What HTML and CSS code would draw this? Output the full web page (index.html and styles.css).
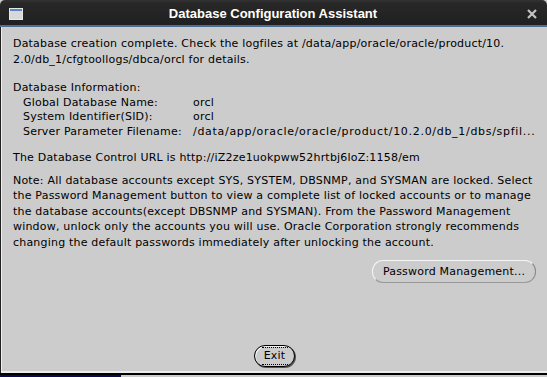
FILE: index.html
```html
<!DOCTYPE html>
<html>
<head>
<meta charset="utf-8">
<link rel="stylesheet" href="styles.css">
</head>
<body>
<div class="window">
  <div class="titlebar">
    <svg class="winicon" width="14" height="12" viewBox="0 0 14 12">
      <rect x="0.5" y="0.5" width="13" height="11" fill="#d8d8d8" stroke="#e8e8e8"/>
      <rect x="1" y="1" width="12" height="2" fill="#5b87c8"/>
    </svg>
    <span class="title">Database Configuration Assistant</span>
    <svg class="close" width="10" height="10" viewBox="0 0 10 10">
      <path d="M1 1 L9 9 M9 1 L1 9" stroke="#c4c4c4" stroke-width="2.2"/>
    </svg>
  </div>
  <div class="content">
    <p class="para first">Database creation complete. Check the logfiles at /data/app/oracle/oracle/product/10.<br>2.0/db_1/cfgtoollogs/dbca/orcl for details.</p>
    <div class="info">
      <div>Database Information:</div>
      <div class="row"><span class="label">Global Database Name:</span><span class="val">orcl</span></div>
      <div class="row"><span class="label">System Identifier(SID):</span><span class="val">orcl</span></div>
      <div class="row"><span class="label">Server Parameter Filename:</span><span class="val path">/data/app/oracle/oracle/product/10.2.0/db_1/dbs/spfil...</span></div>
    </div>
    <p class="para url">The Database Control URL is http://iZ2ze1uokpww52hrtbj6loZ:1158/em</p>
    <p class="para note">Note: All database accounts except SYS, SYSTEM, DBSNMP, and SYSMAN are locked. Select<br>the Password Management button to view a complete list of locked accounts or to manage<br>the database accounts(except DBSNMP and SYSMAN). From the Password Management<br>window, unlock only the accounts you will use. Oracle Corporation strongly recommends<br>changing the default passwords immediately after unlocking the account.</p>
    <div class="pw-row"><button class="btn pw">Password Management...</button></div>
    <div class="exit-row"><button class="btn exit"><span class="focus">Exit</span></button></div>
  </div>
</div>
<div class="taskbar"><div class="task-active"></div></div>
</body>
</html>
```

FILE: styles.css
```css
html, body {
  margin: 0;
  padding: 0;
  background: #cccccc;
  width: 547px;
  height: 377px;
  overflow: hidden;
}
.window {
  width: 547px;
  height: 375px;
  display: flex;
  flex-direction: column;
  box-sizing: border-box;
  border-bottom: 2px solid #000;
  background: #cccccc;
}
.titlebar {
  height: 27px;
  flex: none;
  box-sizing: border-box;
  background: linear-gradient(#333 0px, #282828 3px, #202020 24px);
  border-radius: 5px 5px 0 0;
  border-bottom: 2px solid #4d6d96;
  display: flex;
  align-items: center;
  position: relative;
}
.winicon {
  margin-left: 9px;
  margin-top: 2px;
}
.title {
  flex: 1;
  text-align: center;
  color: #ffffff;
  font-family: "Liberation Sans", Arial, sans-serif;
  font-weight: bold;
  font-size: 13px;
  margin-top: 2px;
  padding-right: 4px;
}
.close {
  margin-right: 10px;
  margin-top: 2px;
}
.content {
  flex: 1;
  border-left: 1px solid #222;
  box-shadow: inset 1px 0 0 #eeeeee, inset 0 -2px 0 #ececec;
  padding: 9px 0 0 12px;
  font-family: "DejaVu Sans", sans-serif;
  font-size: 11px;
  letter-spacing: 0.2px;
  line-height: 15.5px;
  color: #000;
  white-space: nowrap;
  display: flex;
  flex-direction: column;
  position: relative;
}
.para {
  margin: 0;
}
.first {
  line-height: 16px;
}
.info {
  margin-top: 13px;
  line-height: 14.5px;
}
.row {
  display: flex;
  padding-left: 10px;
}
.label {
  width: 170px;
}
.path {
  letter-spacing: 0.7px;
}
.url {
  margin-top: 11px;
}
.note {
  margin-top: 7px;
}
.btn {
  font-family: "DejaVu Sans", sans-serif;
  font-size: 11px;
  letter-spacing: 0.2px;
  background: #cccccc;
  color: #000;
  padding: 0;
  margin: 0;
  border-radius: 11px;
}
.pw-row {
  display: flex;
  justify-content: flex-end;
  padding-right: 11px;
  margin-top: 10px;
}
.pw {
  height: 23px;
  width: 164px;
  border: 1px solid #f4f4f4;
  border-right-color: #888;
  border-bottom-color: #999;
}
.exit-row {
  margin-top: auto;
  margin-bottom: 6px;
  display: flex;
  justify-content: center;
  padding-right: 11px;
}
.exit {
  height: 22px;
  width: 41px;
  border: 1px solid #000;
  box-shadow: inset 1px 1px 0 #f4f4f4, 1px 1px 0 #555;
  display: flex;
  align-items: center;
  justify-content: center;
}
.focus {
  border-top: 1px dotted #000;
  border-bottom: 1px dotted #000;
  padding: 1px 0;
  line-height: 14px;
  width: 26px;
  text-align: center;
}
.taskbar {
  height: 2px;
  background: #cccccc;
  display: flex;
}
.task-active {
  width: 121px;
  background: #0a0a4c;
}
```
